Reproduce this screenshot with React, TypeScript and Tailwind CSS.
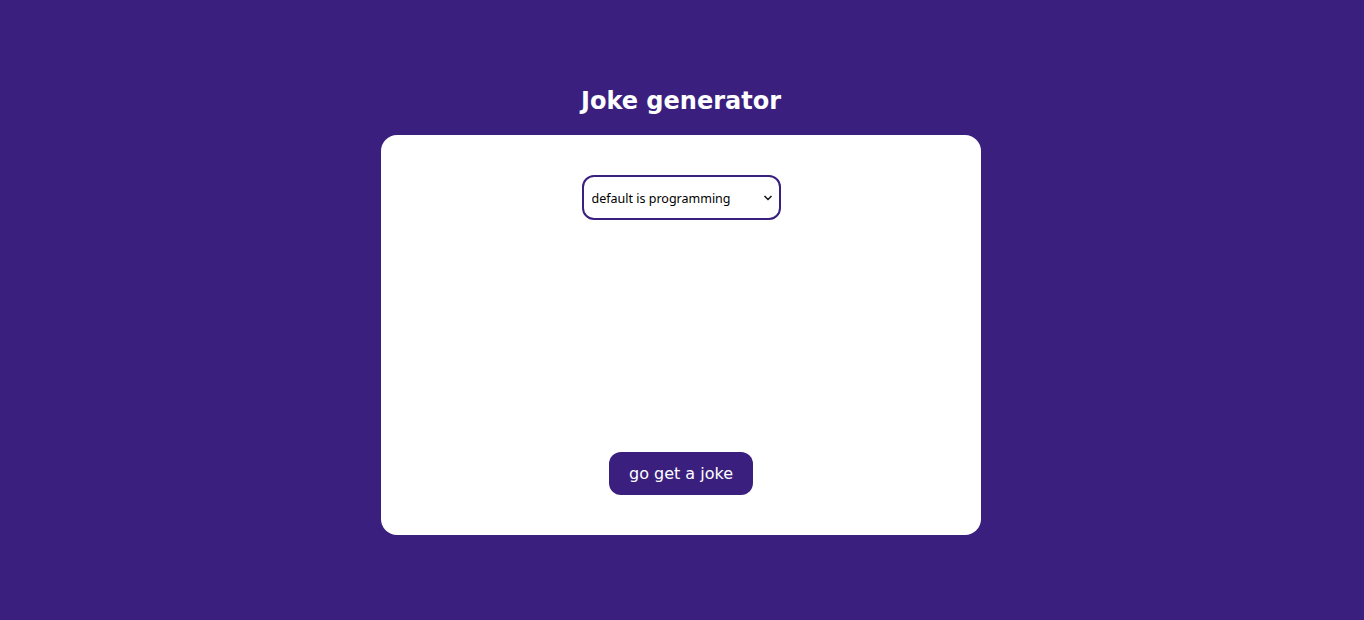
import React from "react";

const App = () => {
  return (
    <div className="h-screen w-full bg-[#3a1f7f] flex flex-col items-center justify-center pr-[2px] font-['DejaVu_Sans',sans-serif]">
      <h1 className="text-[24px] leading-[32px] font-bold text-white mb-[18px]">
        Joke generator
      </h1>
      <div className="w-[600px] h-[400px] bg-white rounded-[16px] flex flex-col items-center justify-between py-10">
        <div className="relative">
          <select className="appearance-none w-[199px] h-[45px] border-2 border-[#3a1f7f] rounded-[12px] pl-[8px] pr-6 pt-[3px] text-[12.5px] font-['Noto_Sans',sans-serif] text-black bg-white outline-none">
            <option>default is programming</option>
            <option>general</option>
            <option>knock-knock</option>
          </select>
          <svg
            className="absolute right-[8px] top-[19px] pointer-events-none"
            width="10"
            height="8"
            viewBox="0 0 10 8"
            fill="none"
          >
            <path d="M1.5 2 L5 5.5 L8.5 2" stroke="#111" strokeWidth="1.5" />
          </svg>
        </div>
        <button className="w-[144px] h-[43px] bg-[#3a1f7f] text-white text-[16px] rounded-[12px]">
          go get a joke
        </button>
      </div>
    </div>
  );
};

export default App;
